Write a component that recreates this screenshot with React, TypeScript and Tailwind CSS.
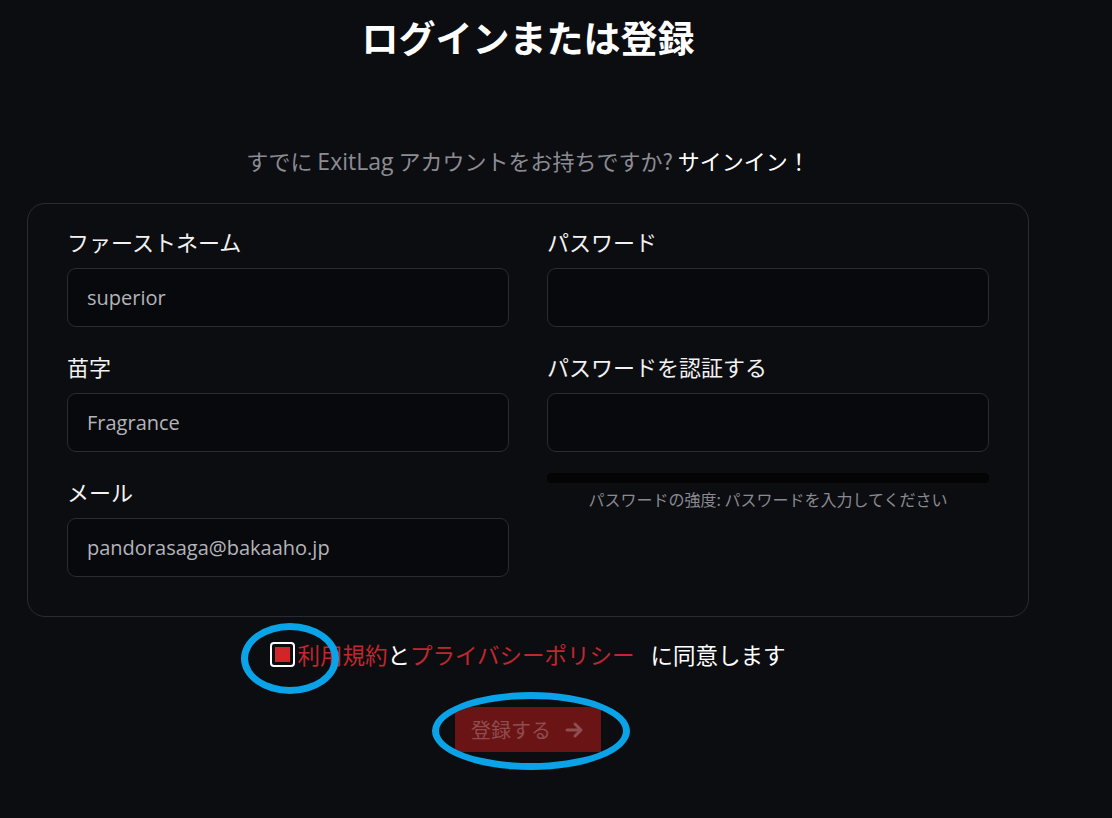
import React from 'react';

const jp = { fontFamily: '"Noto Sans CJK JP", "Noto Sans", sans-serif' };
const latin = { fontFamily: '"Open Sans", "Noto Sans CJK JP", sans-serif' };

const Field = ({ label, value }: { label: string; value?: string }) => (
  <div className="flex flex-col">
    <label className="text-[22px] leading-[28px] text-[#f2f2f2] mb-[13px]" style={jp}>
      {label}
    </label>
    <div className="h-[59px] rounded-[9px] border border-[#2b2c32] bg-[#08090c] flex items-center px-[19px]">
      {value && (
        <span className="text-[20px] text-[#b4b4bb]" style={latin}>
          {value}
        </span>
      )}
    </div>
  </div>
);

const App = () => {
  return (
    <div className="relative w-full h-[818px] bg-[#0c0d11] overflow-hidden" style={jp}>
      <div className="ml-[27px] w-[1002px] flex flex-col items-center">
        {/* Header */}
        <h1 className="mt-[12px] text-[37px] leading-[50px] font-bold text-white" style={jp}>
          ログインまたは登録
        </h1>
        <p className="mt-[83px] text-[22px] leading-[30px] text-[#8c8c93]" style={jp}>
          すでに <span className="text-[23px]" style={latin}>ExitLag</span> アカウントをお持ちですか?{' '}
          <span className="text-white">サインイン！</span>
        </p>

        {/* Form card */}
        <div className="mt-[27px] w-full rounded-[18px] border border-[#2b2c32] px-[39px] pt-[23px] pb-[39px] grid grid-cols-2 gap-x-[38px]">
          <div className="flex flex-col gap-[25px]">
            <Field label="ファーストネーム" value="superior" />
            <Field label="苗字" value="Fragrance" />
            <Field label="メール" value="pandorasaga@bakaaho.jp" />
          </div>
          <div className="flex flex-col gap-[25px]">
            <Field label="パスワード" />
            <div className="flex flex-col">
              <Field label="パスワードを認証する" />
              <div className="mt-[21px] h-[10px] rounded-[4px] bg-[#040405]" />
              <p className="mt-[5px] text-center text-[16px] leading-[22px] text-[#8a8a90]" style={jp}>
                パスワードの強度: パスワードを入力してください
              </p>
            </div>
          </div>
        </div>

        {/* Agreement */}
        <div className="mt-[22px] flex items-center text-[22.5px] leading-[30px]" style={jp}>
          <span className="w-[25px] h-[25px] rounded-[4px] border-2 border-white flex items-center justify-center mr-[2px]">
            <span className="w-[15px] h-[15px] bg-[#d0262a]" />
          </span>
          <span className="text-[#c1272d]">利用規約</span>
          <span className="text-white">と</span>
          <span className="text-[#c1272d]">プライバシーポリシー</span>
          <span className="text-white ml-[16px]">に同意します</span>
        </div>

        {/* Submit */}
        <button
          className="mt-[38px] h-[45px] px-[16px] bg-[#6a1416] flex items-center gap-[14px] text-[20px] text-[#8f4d4f]"
          style={jp}
        >
          登録する
          <svg width="20" height="18" viewBox="0 0 20 18" fill="none">
            <path d="M2 9h14M10 3l6 6-6 6" stroke="#8f4d4f" strokeWidth="3" strokeLinecap="round" strokeLinejoin="round" />
          </svg>
        </button>
      </div>

      {/* Annotation circles */}
      <div className="absolute left-[241px] top-[623px] w-[98px] h-[71px] rounded-[50%] border-[7px] border-[#0aa3e8]" />
      <div className="absolute left-[432px] top-[692px] w-[198px] h-[78px] rounded-[50%] border-[7px] border-[#0aa3e8]" />
    </div>
  );
};

export default App;
